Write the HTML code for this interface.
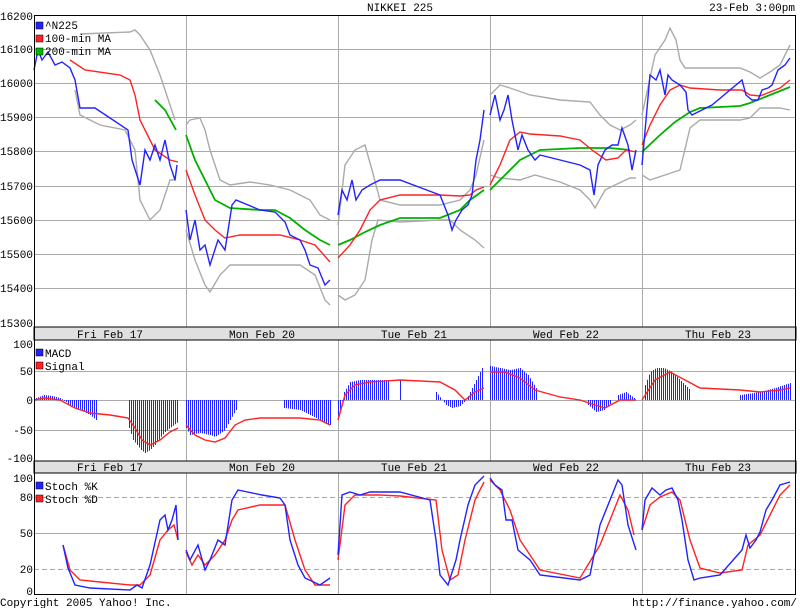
<!DOCTYPE html>
<html><head><meta charset="utf-8"><style>
body{margin:0;background:#fff;width:800px;height:608px;overflow:hidden}
svg{display:block;font-family:"Liberation Mono",monospace;font-size:11px}
</style></head><body>
<svg id="s" width="800" height="608" xmlns="http://www.w3.org/2000/svg">
<rect width="800" height="608" fill="#fff"/>
<text x="400" y="11" text-anchor="middle">NIKKEI 225</text>
<text x="795" y="11" text-anchor="end">23-Feb 3:00pm</text>
<!-- main grid -->
<g stroke="#aaa" stroke-width="1">
<line x1="34" x2="796" y1="49.5" y2="49.5"/><line x1="34" x2="796" y1="83.5" y2="83.5"/><line x1="34" x2="796" y1="117.5" y2="117.5"/><line x1="34" x2="796" y1="151.5" y2="151.5"/><line x1="34" x2="796" y1="186.5" y2="186.5"/><line x1="34" x2="796" y1="220.5" y2="220.5"/><line x1="34" x2="796" y1="254.5" y2="254.5"/><line x1="34" x2="796" y1="288.5" y2="288.5"/>
<line x1="34" x2="796" y1="371.5" y2="371.5"/><line x1="34" x2="796" y1="400.5" y2="400.5"/><line x1="34" x2="796" y1="430.5" y2="430.5"/>
<line x1="34" x2="796" y1="533.5" y2="533.5"/>
<line x1="34" x2="796" y1="497.5" y2="497.5" stroke-dasharray="5,3"/><line x1="34" x2="796" y1="569.5" y2="569.5" stroke-dasharray="5,3"/>
<g id="vd"></g>
</g>
<g font-size="11" text-anchor="end">
<text x="33" y="20">16200</text><text x="33" y="53">16100</text><text x="33" y="87">16000</text><text x="33" y="121">15900</text><text x="33" y="155">15800</text><text x="33" y="190">15700</text><text x="33" y="224">15600</text><text x="33" y="258">15500</text><text x="33" y="292">15400</text><text x="33" y="327">15300</text>
<text x="33" y="348">100</text><text x="33" y="375">50</text><text x="33" y="404">0</text><text x="33" y="434">-50</text><text x="33" y="462">-100</text>
<text x="33" y="482">100</text><text x="33" y="501">80</text><text x="33" y="537">50</text><text x="33" y="573">20</text><text x="33" y="595">0</text>
</g>
<g id="bars"></g>
<g fill="none" stroke-width="1.4">
<g stroke="#aaa">
<polyline points="80,34 130,32 135,30 140,35 150,50 160,75 170,105 175,120"/>
<polyline points="75,90 80,115 100,125 125,130 135,150 140,200 150,220 160,210 170,180 176,180"/>
<polyline points="186,125 190,120 200,118 205,130 210,150 220,180 230,185 250,182 270,185 290,190 300,195 310,200 320,215 330,220"/>
<polyline points="186,230 195,260 205,285 210,292 220,275 230,265 260,265 300,265 315,275 325,300 330,305"/>
<polyline points="338,225 345,165 355,150 365,145 372,170 380,200 400,205 440,205 460,200 470,190 476,175 484,140"/>
<polyline points="338,295 345,300 355,295 365,280 372,240 378,220 400,222 440,220 450,220 460,230 475,240 484,248"/>
<polyline points="490,95 500,85 510,88 530,95 560,100 590,102 600,115 610,125 620,130 630,125 636,120"/>
<polyline points="490,175 500,178 520,180 535,175 560,182 580,190 590,200 595,208 605,190 615,185 630,178 636,178"/>
<polyline points="642,115 655,55 665,40 670,28 676,40 680,60 685,68 690,68 700,68 740,68 750,72 760,78 770,72 780,65 790,45"/>
<polyline points="642,175 650,180 665,175 680,170 690,128 700,120 740,120 750,118 760,108 770,108 780,108 790,110"/>
</g>
<g stroke="#00b000" stroke-width="1.8">
<polyline points="155,100 165,110 176,130"/>
<polyline points="186,135 195,160 205,180 215,200 230,208 260,210 275,210 290,218 305,230 320,240 330,245"/>
<polyline points="338,245 350,240 365,232 380,225 400,218 440,218 460,210 470,200 484,190"/>
<polyline points="490,190 500,180 510,170 520,160 530,155 540,150 580,148 610,148 630,150"/>
<polyline points="642,152 660,135 675,122 690,112 700,108 740,106 750,103 770,95 790,87"/>
</g>
<g stroke="#f22">
<polyline points="70,60 85,70 120,75 130,80 135,95 140,120 155,150 170,160 178,162"/>
<polyline points="186,170 195,195 205,220 215,230 225,238 240,235 280,235 300,240 315,245 330,262"/>
<polyline points="338,258 350,245 360,230 370,210 380,200 400,195 440,195 460,196 470,195 476,190 484,187"/>
<polyline points="490,185 500,165 510,140 520,132 530,134 560,136 580,140 592,150 606,160 618,158 626,150 636,152"/>
<polyline points="642,145 650,125 660,105 670,90 680,85 690,88 720,90 742,90 750,95 760,96 770,92 780,88 790,80"/>
</g>
<g stroke="#22f">
<polyline points="34,70 38,50 42,60 48,52 55,65 62,62 70,68 75,80 80,108 95,108 128,130 132,160 140,185 145,150 150,160 155,145 160,160 165,140 170,165 175,180 177,165"/>
<polyline points="186,210 190,240 195,220 200,250 205,245 210,265 218,240 225,250 232,205 236,200 260,210 275,212 285,222 290,235 300,240 305,250 310,265 318,268 325,285 330,280"/>
<polyline points="338,215 342,190 347,200 352,180 356,200 362,190 370,185 380,180 400,180 440,195 448,215 452,230 456,220 462,210 468,205 472,195 476,160 480,140 484,110"/>
<polyline points="490,115 495,95 500,120 504,110 508,95 512,120 518,150 522,135 528,150 535,160 540,155 580,165 590,170 594,195 598,165 605,150 612,145 618,145 622,128 628,145 632,170 636,150"/>
<polyline points="642,165 646,120 650,75 656,80 660,70 665,95 668,75 672,80 680,85 686,92 688,110 692,115 712,105 742,80 746,95 752,100 758,100 762,90 768,88 772,85 778,70 785,65 790,58"/>
</g>
<g stroke="#f22">
<polyline points="34,400 45,398 60,400 75,408 90,413 110,415 128,418 135,428 142,440 150,445 160,440 170,432 178,428"/>
<polyline points="186,425 195,435 205,440 215,442 225,438 235,425 245,420 260,418 280,418 300,418 320,420 330,425"/>
<polyline points="338,420 345,395 355,385 370,382 400,380 440,382 455,390 465,400 475,392 484,388"/>
<polyline points="490,372 505,372 520,378 535,390 560,397 580,400 595,405 605,408 620,400 636,400"/>
<polyline points="642,400 655,380 670,372 685,380 700,388 740,390 760,392 780,390 790,388"/>
<polyline points="63,545 70,570 80,580 100,582 130,585 140,585 150,575 160,540 168,530 174,525 178,540"/>
<polyline points="186,552 192,565 198,555 205,565 215,555 225,540 232,520 238,510 260,505 285,505 295,540 305,570 315,585 330,585"/>
<polyline points="338,560 345,505 355,495 380,495 400,496 436,500 442,550 450,580 458,575 465,540 475,500 484,482"/>
<polyline points="490,480 500,490 510,510 520,540 540,570 580,578 600,545 610,520 620,495 628,510 634,535"/>
<polyline points="642,530 650,505 660,497 672,492 680,500 690,540 700,568 720,573 742,570 748,545 760,535 770,515 780,495 790,485"/>
</g>
<g stroke="#22f">
<polyline points="63,545 68,568 75,585 90,588 130,590 137,585 142,588 150,565 160,520 165,515 168,530 172,520 176,505 178,540"/>
<polyline points="186,550 190,560 198,545 205,570 210,560 218,540 225,545 232,500 238,490 262,495 280,498 285,505 290,540 298,565 305,578 320,585 330,578"/>
<polyline points="338,555 342,495 350,492 360,495 370,492 400,492 430,500 436,540 440,575 448,585 456,560 460,540 468,505 475,485 484,476"/>
<polyline points="490,478 495,485 502,490 506,520 512,520 518,550 530,560 540,575 580,580 590,575 600,525 610,500 618,480 622,485 628,525 636,550"/>
<polyline points="642,530 645,500 652,488 660,495 666,490 672,488 678,500 682,520 688,560 694,580 700,578 720,575 742,550 746,535 750,548 756,540 760,532 766,510 772,500 780,485 790,482"/>
</g>
</g>
<!-- date bars -->
<rect x="34" y="327" width="762" height="13" fill="#e0e0e0" stroke="#000"/>
<rect x="34" y="461" width="762" height="12" fill="#e0e0e0" stroke="#000"/>
<g text-anchor="middle">
<text x="110" y="338">Fri Feb 17</text><text x="262" y="338">Mon Feb 20</text><text x="414" y="338">Tue Feb 21</text><text x="566" y="338">Wed Feb 22</text><text x="718" y="338">Thu Feb 23</text>
<text x="110" y="471">Fri Feb 17</text><text x="262" y="471">Mon Feb 20</text><text x="414" y="471">Tue Feb 21</text><text x="566" y="471">Wed Feb 22</text><text x="718" y="471">Thu Feb 23</text>
</g>
<g stroke="#000" fill="none">
<rect x="34.5" y="15.5" width="761" height="579"/>
</g>
<g>
<rect x="36" y="22" width="7" height="7" fill="#22f" stroke="#000" stroke-width=".5"/><text x="45" y="29">^N225</text>
<rect x="36" y="35" width="7" height="7" fill="#f22" stroke="#000" stroke-width=".5"/><text x="45" y="42">100-min MA</text>
<rect x="36" y="48" width="7" height="7" fill="#0b0" stroke="#000" stroke-width=".5"/><text x="45" y="55">200-min MA</text>
<rect x="36" y="349" width="7" height="7" fill="#22f" stroke="#000" stroke-width=".5"/><text x="45" y="357">MACD</text>
<rect x="36" y="362" width="7" height="7" fill="#f22" stroke="#000" stroke-width=".5"/><text x="45" y="370">Signal</text>
<rect x="36" y="482" width="7" height="7" fill="#22f" stroke="#000" stroke-width=".5"/><text x="45" y="490">Stoch %K</text>
<rect x="36" y="495" width="7" height="7" fill="#f22" stroke="#000" stroke-width=".5"/><text x="45" y="503">Stoch %D</text>
</g>
<text x="0" y="606">Copyright 2005 Yahoo! Inc.</text>
<text x="797" y="606" text-anchor="end">http://finance.yahoo.com/</text>
</svg>
<script>
var NS="http://www.w3.org/2000/svg";
var vd=document.getElementById("vd");
[186,338,490,642].forEach(function(x){[[16,327],[340,461],[473,594]].forEach(function(r){var l=document.createElementNS(NS,"line");l.setAttribute("x1",x+.5);l.setAttribute("x2",x+.5);l.setAttribute("y1",r[0]);l.setAttribute("y2",r[1]);vd.appendChild(l);});});
var cl=[
[[36,398],[44,395],[52,396],[60,398],[66,402]],
[[68,404],[80,410],[90,415],[96,420]],
[[129,428],[133,440],[137,445],[141,450],[145,453],[150,450],[155,445],[160,438],[165,432],[170,428],[178,422]],
[[186,428],[190,435],[200,433],[210,435],[215,437],[225,430],[230,420],[236,410]],
[[284,408],[300,410],[320,420],[330,425]],
[[338,420],[340,410],[344,392],[350,382],[360,380],[380,380],[388,380]],
[[436,392],[446,405],[452,408],[460,406],[466,400],[470,392],[476,380],[482,368]],
[[490,366],[500,368],[510,370],[520,368],[528,375],[536,388]],
[[588,405],[596,412],[604,410],[610,404]],
[[618,395],[626,392],[634,398]],
[[645,385],[650,372],[656,368],[664,368],[672,372],[680,380],[690,390]],
[[740,395],[760,392],[775,388],[790,383]]
];
var d="";
cl.forEach(function(p){for(var x=p[0][0];x<=p[p.length-1][0];x+=2){var y=p[0][1];for(var i=0;i<p.length-1;i++){if(x>=p[i][0]&&x<=p[i+1][0]){var t=(x-p[i][0])/((p[i+1][0]-p[i][0])||1);y=p[i][1]+t*(p[i+1][1]-p[i][1]);}}d+="M"+(x+.5)+" 400V"+y.toFixed(1);}});
var pa=document.createElementNS(NS,"path");pa.setAttribute("d",d+"M400.5 400V380");pa.setAttribute("stroke","#22f");pa.setAttribute("fill","none");
document.getElementById("bars").appendChild(pa);
</script>
</body></html>
